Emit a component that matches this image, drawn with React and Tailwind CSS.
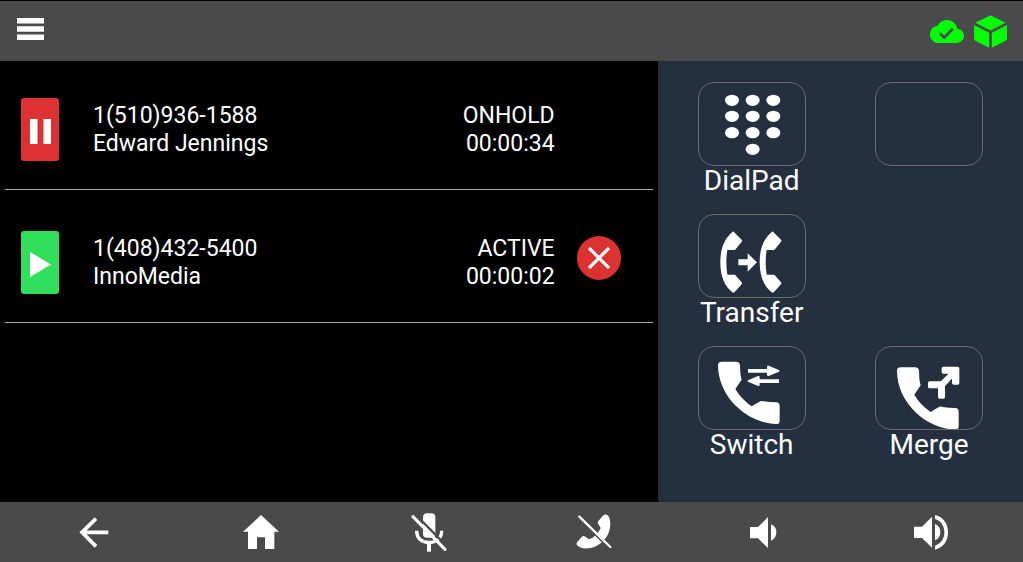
const CALLS = [
  { number: "1(510)936-1588", name: "Edward Jennings", status: "ONHOLD", time: "00:00:34", held: true },
  { number: "1(408)432-5400", name: "InnoMedia", status: "ACTIVE", time: "00:00:02", held: false },
];

const HANDSET =
  "M60 57Q60 47 72 47H114Q125 47 126 58L127 80Q128 92 131 101L112 129Q130 160 161 181L184 167Q190 163 197 166Q215 169 235 169Q245 170 245 180V224Q245 234 235 234C150 232 60 155 60 57Z";

const RECEIVER =
  "M104 53Q107 52 110 56L131 77Q133 80 131 83L111 108H88Q82 145 88 182H111L131 205Q133 208 131 211L110 234Q106 238 103 235C80 217 67 188 67 145C67 102 80 73 104 53Z";

function DialPadIcon() {
  const dots = [
    [102, 55], [164, 55], [226, 55],
    [102, 103], [164, 103], [226, 103],
    [102, 152], [164, 152], [226, 152],
    [164, 202],
  ];
  return dots.map(([x, y]) => <ellipse key={`${x}-${y}`} cx={x} cy={y} rx="21" ry="17" />);
}

function TransferIcon() {
  return (
    <>
      <path d={RECEIVER} />
      <path d={RECEIVER} transform="translate(118 0)" />
      <path d="M121 136H149V118L177 145L149 173V154H121Z" />
    </>
  );
}

function SwitchIcon() {
  return (
    <>
      <path d={HANDSET} />
      <path d="M150 69H207V62Q208 58 212 59L243 72Q246 74 243 77L212 90Q208 91 207 87V80H150Z" />
      <path d="M243 100H185V93Q184 89 180 90L150 103Q147 105 150 107L180 120Q184 121 185 117V111H243Z" />
    </>
  );
}

function MergeIcon() {
  return (
    <>
      <path d={HANDSET} transform="translate(6 17)" />
      <rect x="159" y="106" width="46" height="21" rx="5" />
      <rect x="189" y="108" width="21" height="50" rx="5" />
      <path d="M193 110L230 74L242 86L208 122Z" />
      <path d="M205 62H248Q253 62 253 67V111Q253 116 248 116H237Q231 116 231 110V98L218 83H205Q200 83 200 78V67Q200 62 205 62Z" />
    </>
  );
}

const ACTIONS = [
  { label: "DialPad", Icon: DialPadIcon },
  { label: "", Icon: null },
  { label: "Transfer", Icon: TransferIcon },
  null,
  { label: "Switch", Icon: SwitchIcon },
  { label: "Merge", Icon: MergeIcon },
];

const NAV = [
  {
    label: "Back",
    icon: (
      <svg className="h-[31px] w-[30px]" viewBox="0 0 90 93" fill="none" stroke="currentColor" strokeWidth="11">
        <path d="M88 46H8M51 5L9 46L51 88" />
      </svg>
    ),
  },
  {
    label: "Home",
    icon: (
      <svg className="h-[34px] w-9" viewBox="0 0 108 102" fill="currentColor">
        <path d="M54 0L108 50H94V102H66V67H42V102H15V50H0Z" />
      </svg>
    ),
  },
  {
    label: "Mute",
    icon: (
      <svg className="h-[39px] w-9" viewBox="0 0 108 117" fill="none" stroke="currentColor">
        <rect x="36" y="1" width="37" height="73" rx="12" fill="currentColor" stroke="none" />
        <path d="M17 53C17 78 34 88 54 88S92 78 92 53" strokeWidth="10" />
        <path d="M54 88V116" strokeWidth="12" />
        <path d="M12 3L108 100" stroke="#4a4a4a" strokeWidth="7" />
        <path d="M6 11L102 109" strokeWidth="9" strokeLinecap="round" />
      </svg>
    ),
  },
  {
    label: "Hang up",
    icon: (
      <svg className="h-9 w-10" viewBox="0 0 120 108" fill="none" stroke="currentColor">
        <path
          d="M83 3Q88 0 94 3Q102 8 103 30C103 65 78 94 45 102Q15 107 3 94Q0 90 3 85L17 69Q22 64 28 68L39 76Q62 68 74 42L67 31Q63 26 67 21Z"
          fill="currentColor"
          stroke="none"
        />
        <path d="M7 12L99 103" stroke="#4a4a4a" strokeWidth="5" />
        <path d="M10 8L103 99" strokeWidth="7" strokeLinecap="round" />
      </svg>
    ),
  },
  {
    label: "Volume down",
    icon: (
      <svg className="h-[31px] w-[27px]" viewBox="0 0 81 93" fill="currentColor">
        <path d="M0 30H24L54 0V93L24 64H0ZM63 22Q79 28 79 46T63 71Z" />
      </svg>
    ),
  },
  {
    label: "Volume up",
    icon: (
      <svg className="h-[35px] w-[34px]" viewBox="0 0 102 105" fill="currentColor">
        <path d="M0 35H24L54 5V98L24 69H0ZM63 27Q79 33 79 51T63 76Z" />
        <path d="M63 0C88 6 102 26 102 52S88 98 63 104V92C81 86 91 72 91 52S81 18 63 12Z" />
      </svg>
    ),
  },
];

function Header() {
  return (
    <header className="flex h-[61px] items-center justify-between border-t border-black bg-[#4a4a4a] pl-[17px] pr-4">
      <button aria-label="Menu" className="pb-1 text-white">
        <svg className="h-[22px] w-[27px]" viewBox="0 0 27 22" fill="currentColor">
          <path d="M0 0H27V5.4H0ZM0 8.3H27V13.7H0ZM0 16.6H27V22H0Z" />
        </svg>
      </button>
      <div className="flex items-center gap-[10px] text-[#00ff00]">
        <svg className="h-[23px] w-[34px]" viewBox="0 4 24 16" preserveAspectRatio="none" role="img" aria-label="Connected">
          <path
            fill="currentColor"
            d="M19.35 10.04C18.67 6.59 15.64 4 12 4 9.11 4 6.6 5.64 5.35 8.04 2.34 8.36 0 10.91 0 14c0 3.31 2.69 6 6 6h13c2.76 0 5-2.24 5-5 0-2.64-2.05-4.78-4.65-4.96z"
          />
          <path d="M6.9 13.3L10 16.2L16.2 10" fill="none" stroke="#4a4a4a" strokeWidth="1.9" />
        </svg>
        <svg className="h-[33px] w-[33px]" viewBox="0 0 98 98" fill="currentColor" role="img" aria-label="Device">
          <path d="M4 23L46 2Q49 0 52 2L94 23L49 46ZM0 30L45 53V97L5 77Q0 75 0 70ZM53 53L98 30V70Q98 75 93 77L53 97Z" />
        </svg>
      </div>
    </header>
  );
}

function CallRow({ call }) {
  return (
    <li className="flex items-center border-b border-[#aaaaaa] pb-7 pl-4 pr-8 pt-[37px]">
      <button
        aria-label={call.held ? "Resume" : "Hold"}
        className={`flex h-[63px] w-[38px] items-center justify-center rounded-[3px] pt-1 text-white ${
          call.held ? "bg-[#de3232]" : "bg-[#32df5a]"
        }`}
      >
        <svg className="h-[25px] w-[21px]" viewBox="0 0 21 25" fill="currentColor">
          {call.held ? <path d="M0 0H7.5V25H0ZM13.5 0H21V25H13.5Z" /> : <path d="M0 0L21 12.5L0 25Z" />}
        </svg>
      </button>
      <div className="ml-[34px] flex-1">
        <p>{call.number}</p>
        <p>{call.name}</p>
      </div>
      <div className="text-right">
        <p>{call.status}</p>
        <p>{call.time}</p>
      </div>
      <div className="ml-[22px] w-11">
        {!call.held && (
          <button
            aria-label="End call"
            className="mb-[10px] flex h-11 w-11 items-center justify-center rounded-full bg-[#de3232] text-white"
          >
            <svg className="h-[22px] w-[22px]" viewBox="0 0 22 22" fill="none" stroke="currentColor" strokeWidth="3.2">
              <path d="M1 1L21 21M21 1L1 21" />
            </svg>
          </button>
        )}
      </div>
    </li>
  );
}

function ActionButton({ label, Icon }) {
  return (
    <button aria-label={label || "Unassigned"} className="flex w-[108px] flex-col items-center">
      <span className="block h-[84px] w-full rounded-2xl outline -outline-offset-1 outline-[#6b6b6b]">
        {Icon && (
          <svg className="h-full w-full" viewBox="0 0 324 252" fill="currentColor">
            <Icon />
          </svg>
        )}
      </span>
      <span className="h-[30px] text-[28px] leading-[30px]">{label}</span>
    </button>
  );
}

export default function App() {
  return (
    <div className="flex min-h-screen flex-col bg-black font-[Roboto,sans-serif] text-white">
      <Header />
      <main className="grid flex-1 grid-cols-[9fr_5fr]">
        <ul className="flex flex-col gap-1 px-[5px] text-[23px] leading-7">
          {CALLS.map((call) => (
            <CallRow key={call.number} call={call} />
          ))}
        </ul>
        <section className="bg-[#242f3f] px-10 pt-[21px]">
          <div className="grid grid-cols-[108px_108px] justify-between gap-y-[18px]">
            {ACTIONS.map((action, i) => (action ? <ActionButton key={i} {...action} /> : <div key={i} />))}
          </div>
        </section>
      </main>
      <nav className="grid h-[60px] grid-cols-6 bg-[#4a4a4a] pl-[10px] pr-2">
        {NAV.map((item) => (
          <button key={item.label} aria-label={item.label} className="flex items-center justify-center">
            {item.icon}
          </button>
        ))}
      </nav>
    </div>
  );
}
